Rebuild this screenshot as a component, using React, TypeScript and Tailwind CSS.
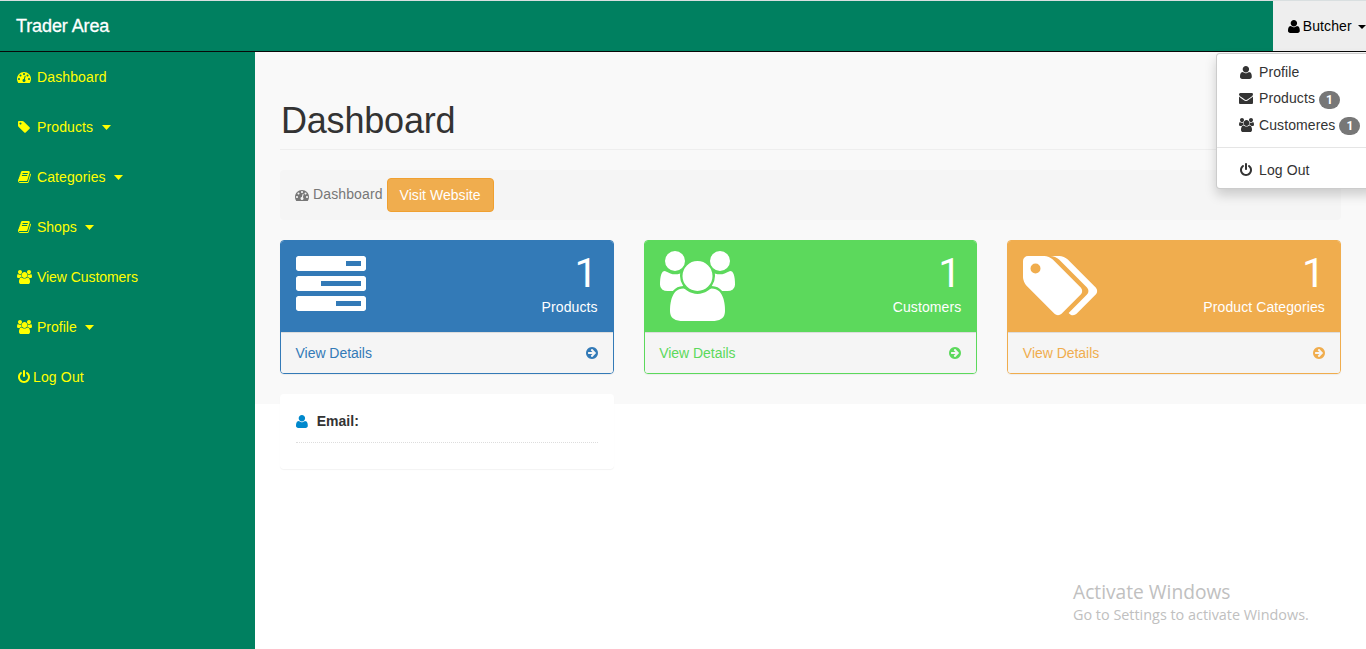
import React from 'react';

type Glyph = { w: number; x?: number; d: string; flip?: boolean };

const glyphs: Record<string, Glyph> = {
  dashboard: {
    w: 1792,
    d: 'M384 1152q0-53-37.5-90.5t-90.5-37.5-90.5 37.5-37.5 90.5 37.5 90.5 90.5 37.5 90.5-37.5 37.5-90.5zm192-448q0-53-37.5-90.5t-90.5-37.5-90.5 37.5-37.5 90.5 37.5 90.5 90.5 37.5 90.5-37.5 37.5-90.5zm428 481l101-382q6-26-7.5-48.5t-38.5-29.5-48 6.5-30 39.5l-101 382q-60 5-107 43.5t-63 98.5q-20 77 20 146t117 89 146-20 89-117q16-60-6-117t-72-91zm660-33q0-53-37.5-90.5t-90.5-37.5-90.5 37.5-37.5 90.5 37.5 90.5 90.5 37.5 90.5-37.5 37.5-90.5zm-640-640q0-53-37.5-90.5t-90.5-37.5-90.5 37.5-37.5 90.5 37.5 90.5 90.5 37.5 90.5-37.5 37.5-90.5zm448 192q0-53-37.5-90.5t-90.5-37.5-90.5 37.5-37.5 90.5 37.5 90.5 90.5 37.5 90.5-37.5 37.5-90.5zm320 448q0 261-141 483-19 29-54 29h-1402q-35 0-54-29-141-221-141-483 0-182 71-348t191-286 286-191 348-71 348 71 286 191 191 286 71 348z',
  },
  tag: {
    w: 1536,
    x: 128,
    d: 'M576 448q0-53-37.5-90.5t-90.5-37.5-90.5 37.5-37.5 90.5 37.5 90.5 90.5 37.5 90.5-37.5 37.5-90.5zm1067 576q0 53-37 90l-491 492q-39 37-91 37-53 0-90-37l-715-716q-38-37-64.5-101t-26.5-117v-416q0-52 38-90t90-38h416q53 0 117 26.5t102 64.5l715 714q37 39 37 91z',
  },
  tags: {
    w: 1920,
    d: 'M448 448q0-53-37.5-90.5t-90.5-37.5-90.5 37.5-37.5 90.5 37.5 90.5 90.5 37.5 90.5-37.5 37.5-90.5zm1067 576q0 53-37 90l-491 492q-39 37-91 37-53 0-90-37l-715-716q-38-37-64.5-101t-26.5-117v-416q0-52 38-90t90-38h416q53 0 117 26.5t102 64.5l715 714q37 39 37 91zm384 0q0 53-37 90l-491 492q-39 37-91 37-36 0-59-14t-53-45l470-470q37-37 37-90 0-52-37-91l-715-714q-38-38-102-64.5t-117-26.5h224q53 0 117 26.5t102 64.5l715 714q37 39 37 91z',
  },
  book: {
    w: 1664,
    x: 64,
    d: 'M1703 478q40 57 18 129l-275 906q-19 64-76.5 107.5t-122.5 43.5h-923q-77 0-148.5-53.5t-99.5-131.5q-24-67-2-127 0-4 3-27t4-37q1-8-3-21.5t-3-19.5q2-11 8-21t16.5-23.5 16.5-23.5q23-38 45-91.5t30-91.5q3-10 .5-30t-.5-28q3-11 17-28t17-23q21-36 42-92t25-90q1-9-2.5-32t.5-28q4-13 22-30.5t22-22.5q19-26 42.5-84.5t27.5-96.5q1-8-3-25.5t-2-26.5q2-8 9-18t18-23 17-21q8-12 16.5-30.5t15-35 16-36 19.5-32 26.5-23.5 36-11.5 47.5 5.5l-1 3q38-9 51-9h761q74 0 114 56t18 130l-274 906q-36 119-71.5 153.5t-128.5 34.5h-869q-27 0-38 15-11 16-1 43 24 70 144 70h923q29 0 56-15.5t35-41.5l300-987q7-22 5-57 38 15 59 43zm-1064 2q-4 13 2 22.5t20 9.5h608q13 0 25.5-9.5t16.5-22.5l21-64q4-13-2-22.5t-20-9.5h-608q-13 0-25.5 9.5t-16.5 22.5zm-83 256q-4 13 2 22.5t20 9.5h608q13 0 25.5-9.5t16.5-22.5l21-64q4-13-2-22.5t-20-9.5h-608q-13 0-25.5 9.5t-16.5 22.5z',
  },
  users: {
    w: 1920,
    d: 'M593 896q-162 5-265 128h-134q-82 0-138-40.5t-56-118.5q0-353 124-353 6 0 43.5 21t97.5 42.5 119 21.5q67 0 133-23-5 37-5 66 0 139 81 256zm1071 637q0 120-73 189.5t-194 69.5h-874q-121 0-194-69.5t-73-189.5q0-53 3.5-103.5t14-109 26.5-108.5 43-97.5 62-81 85.5-53.5 111.5-20q10 0 43 21.5t73 48 107 48 135 21.5 135-21.5 107-48 73-48 43-21.5q61 0 111.5 20t85.5 53.5 62 81 43 97.5 26.5 108.5 14 109 3.5 103.5zm-1024-1277q0 106-75 181t-181 75-181-75-75-181 75-181 181-75 181 75 75 181zm704 384q0 159-112.5 271.5t-271.5 112.5-271.5-112.5-112.5-271.5 112.5-271.5 271.5-112.5 271.5 112.5 112.5 271.5zm576 225q0 78-56 118.5t-138 40.5h-134q-103-123-265-128 81-117 81-256 0-29-5-66 66 23 133 23 59 0 119-21.5t97.5-42.5 43.5-21q124 0 124 353zm-128-609q0 106-75 181t-181 75-181-75-75-181 75-181 181-75 181 75 75 181z',
  },
  user: {
    w: 1408,
    flip: true,
    d: 'M1408 131q0 -120 -73 -189.5t-194 -69.5h-874q-121 0 -194 69.5t-73 189.5q0 53 3.5 103.5t14 109t26.5 108.5t43 97.5t62 81t85.5 53.5t111.5 20q9 0 42 -21.5t74.5 -48t108 -48t133.5 -21.5t133.5 21.5t108 48t74.5 48t42 21.5q61 0 111.5 -20t85.5 -53.5t62 -81t43 -97.5t26.5 -108.5t14 -109t3.5 -103.5zM1088 1024q0 -159 -112.5 -271.5t-271.5 -112.5t-271.5 112.5t-112.5 271.5t112.5 271.5t271.5 112.5t271.5 -112.5t112.5 -271.5z',
  },
  power: {
    w: 1536,
    x: 128,
    d: 'M1664 896q0 156-61 298t-164 245-245 164-298 61-298-61-245-164-164-245-61-298q0-182 80.5-343t226.5-270q43-32 95.5-25t83.5 50q32 42 24.5 94.5t-49.5 84.5q-98 74-151.5 181t-53.500 228q0 104 40.5 198.5t109.5 163.5 163.5 109.5 198.5 40.5 198.5-40.5 163.5-109.5 109.5-163.5 40.5-198.5q0-121-53.5-228t-151.5-181q-42-32-49.5-84.5t24.5-94.5q31-43 84-50t95 25q146 109 226.5 270t80.5 343zm-640-768v640q0 52-38 90t-90 38-90-38-38-90v-640q0-52 38-90t90-38 90 38 38 90z',
  },
  envelope: {
    w: 1792,
    d: 'M1792 710v794q0 66-47 113t-113 47h-1472q-66 0-113-47t-47-113v-794q44 49 101 87 362 246 497 345 57 42 92.5 65.5t94.5 48 110 24.5h2q51 0 110-24.5t94.5-48 92.5-65.5q170-123 498-345 57-39 100-87zm0-294q0 79-49 151t-122 123q-376 261-468 325-10 7-42.5 30.5t-54 38-52 32.5-57.5 27-50 9h-2q-23 0-50-9t-57.5-27-52-32.5-54-38-42.5-30.5q-91-64-262-182.5t-205-142.5q-62-42-117-115.5t-55-136.5q0-78 41.5-130t118.5-52h1472q65 0 112.5 47t47.5 113z',
  },
  tasks: {
    w: 1792,
    d: 'M1024 1408h640v-128h-640v128zm-384-512h1024v-128h-1024v128zm640-512h384v-128h-384v128zm512 832v256q0 26-19 45t-45 19h-1664q-26 0-45-19t-19-45v-256q0-26 19-45t45-19h1664q26 0 45 19t19 45zm0-512v256q0 26-19 45t-45 19h-1664q-26 0-45-19t-19-45v-256q0-26 19-45t45-19h1664q26 0 45 19t19 45zm0-512v256q0 26-19 45t-45 19h-1664q-26 0-45-19t-19-45v-256q0-26 19-45t45-19h1664q26 0 45 19t19 45z',
  },
  arrow: {
    w: 1536,
    x: 128,
    d: 'M1413 896q0-27-18-45l-91-91-271-271-91-91q-18-18-45-18t-45 18l-91 91q-18 18-18 45t18 45l189 189h-502q-26 0-45 19t-19 45v128q0 26 19 45t45 19h502l-189 189q-19 19-19 45t19 45l91 91q18 18 45 18t45-18l362-362 91-91q18-18 18-45zm251 0q0 209-103 385.5t-279.5 279.5-385.5 103-385.5-103-279.5-279.5-103-385.5 103-385.5 279.5-279.5 385.5-103 385.5 103 279.5 279.5 103 385.5z',
  },
};

function Icon({ name, className = 'h-3.5' }: { name: string; className?: string }) {
  const g = glyphs[name];
  const size = name === 'user' ? 'h-[15px]' : className;
  return (
    <svg viewBox={`${g.x ?? 0} 0 ${g.w} 1792`} fill="currentColor" className={`block w-auto shrink-0 ${size}`}>
      <path d={g.d} transform={g.flip ? 'translate(0 1536) scale(1 -1)' : undefined} />
    </svg>
  );
}

function Caret({ className }: { className: string }) {
  return (
    <svg viewBox="0 0 8 4" preserveAspectRatio="none" fill="currentColor" className={`block shrink-0 ${className}`}>
      <path d="M0 0h8L4 4z" />
    </svg>
  );
}

const menu = [
  { icon: 'dashboard', label: 'Dashboard', caret: false, track: 'tracking-[0.12px]' },
  { icon: 'tag', label: 'Products', caret: true, track: 'tracking-[0.12px]' },
  { icon: 'book', label: 'Categories', caret: true, track: 'tracking-[0.1px]' },
  { icon: 'book', label: 'Shops', caret: true, track: '' },
  { icon: 'users', label: 'View Customers', caret: false, track: 'tracking-[-0.06px]' },
  { icon: 'users', label: 'Profile', caret: true, track: '' },
];

const cards = [
  { icon: 'tasks', label: 'Products', bg: 'bg-[#337ab7]', border: 'border-[#337ab7]', text: 'text-[#337ab7]' },
  { icon: 'users', label: 'Customers', bg: 'bg-[#5cd95c]', border: 'border-[#5cd95c]', text: 'text-[#5cd95c]' },
  { icon: 'tags', label: 'Product Categories', bg: 'bg-[#f0ad4e]', border: 'border-[#f0ad4e]', text: 'text-[#f0ad4e]' },
];

function DropItem({ icon, label, badge, h }: { icon: string; label: string; badge?: string; h: string }) {
  return (
    <li className={`flex items-center pl-5 tracking-[0.1px] ${h}`}>
      <span className="mr-1 flex w-[18px] justify-center">
        <Icon name={icon} />
      </span>
      <span>{label}</span>
      {badge && (
        <span className="mt-[3px] ml-1 flex h-[18px] w-[21px] items-center justify-center rounded-[10px] bg-[#777] font-['Roboto',sans-serif] text-xs font-bold text-white">
          {badge}
        </span>
      )}
    </li>
  );
}

export default function App() {
  return (
    <div className="relative flex h-[649px] w-full flex-col overflow-hidden bg-white font-['Liberation_Sans',Arial,sans-serif] text-sm leading-5 text-[#333]">
      <header className="flex h-[52px] shrink-0 justify-between border-t border-b border-t-[#d9dfe0] border-b-[#080808] bg-[#008060]">
        <div className="pl-4 pt-[15px] text-[18px] tracking-[-0.1px] text-white [-webkit-text-stroke:0.3px_white]">Trader Area</div>
        <div className="flex w-[93px] items-center bg-[#eee] pl-[15px] text-black">
          <Icon name="user" />
          <span className="ml-[3px] tracking-[0.1px]">Butcher</span>
          <Caret className="ml-1.5 mt-0.5 h-1 w-2" />
        </div>
      </header>

      <div className="flex min-h-0 flex-1">
        <nav className="w-[255px] shrink-0 bg-[#008060] text-[#ff0]">
          <ul>
            {menu.map((m) => (
              <li key={m.label} className="flex h-[50px] items-center pl-[15px]">
                <span className="mr-1 flex w-[18px] justify-center">
                  <Icon name={m.icon} />
                </span>
                <span className={m.track}>{m.label}</span>
                {m.caret && <Caret className="ml-[8.5px] mt-px h-[5px] w-[9px]" />}
              </li>
            ))}
            <li className="flex h-[50px] items-center pl-[15px]">
              <span className="flex w-[18px] justify-center">
                <Icon name="power" />
              </span>
              <span className="tracking-[0.15px]">Log Out</span>
            </li>
          </ul>
        </nav>

        <main className="h-[352px] flex-1 bg-[#f9f9f9] px-[25px] pt-12">
          <div className="h-[50px] border-b border-[#eee] pt-px">
            <h1 className="pl-px text-[36px] leading-[40px] tracking-[-0.2px]">Dashboard</h1>
          </div>
          <div className="mt-5 flex h-[50px] items-center rounded bg-[#f5f5f5] pl-[15px] text-[#777]">
            <Icon name="dashboard" />
            <span className="mb-0.5 ml-1 tracking-[0.12px]">Dashboard</span>
            <span className="ml-1 flex h-[34px] w-[107px] items-center justify-center rounded border border-[#f0a030] bg-[#f0ad4e] tracking-[0.05px] text-white">
              Visit Website
            </span>
          </div>

          <div className="mt-5 grid grid-cols-3 gap-x-[30px] gap-y-5">
            {cards.map((c) => (
              <section
                key={c.label}
                className={`h-[134px] overflow-hidden rounded border shadow-[0_1px_1px_rgba(0,0,0,0.05)] ${c.border}`}
              >
                <div className={`flex h-[91px] justify-between px-[15px] pt-2.5 text-white ${c.bg}`}>
                  <Icon name={c.icon} className="h-[70px]" />
                  <div className="text-right">
                    <div className="font-['Roboto',sans-serif] text-[41px] leading-[44px]">1</div>
                    <div className="mt-[2px] tracking-[0.1px]">{c.label}</div>
                  </div>
                </div>
                <div className={`flex h-[41px] items-center justify-between border-t border-[#ddd] bg-[#f5f5f5] pl-[14.5px] pr-[15px] ${c.text}`}>
                  <span className="tracking-[-0.03px]">View Details</span>
                  <Icon name="arrow" />
                </div>
              </section>
            ))}
            <section className="h-[75px] rounded bg-white px-4 pt-[17px] shadow-[0_1px_1px_rgba(0,0,0,0.05)]">
              <div className="flex h-8 items-start border-b border-dotted border-[#ddd]">
                <span className="mt-[3px] text-[#0088cc]">
                  <Icon name="user" />
                </span>
                <strong className="ml-[9px]">Email:</strong>
              </div>
            </section>
          </div>
        </main>
      </div>

      <ul className="absolute left-[1216px] top-[53px] h-[136px] w-40 rounded border border-black/20 bg-white py-[5px] shadow-[0_6px_12px_rgba(0,0,0,0.175)]">
        <DropItem icon="user" label="Profile" h="h-[26px]" />
        <DropItem icon="envelope" label="Products" badge="1" h="h-[26px]" />
        <DropItem icon="users" label="Customeres" badge="1" h="h-[27px]" />
        <li className="my-[9px] h-px bg-[#e5e5e5]" />
        <DropItem icon="power" label="Log Out" h="h-[26px]" />
      </ul>

      <div className="absolute left-[1073px] top-[580px] font-['Open_Sans','Noto_Sans',sans-serif] text-[#c0c0c0]">
        <div className="text-[19.2px] leading-6">Activate Windows</div>
        <div className="text-[14.4px] leading-[21px]">Go to Settings to activate Windows.</div>
      </div>
    </div>
  );
}
